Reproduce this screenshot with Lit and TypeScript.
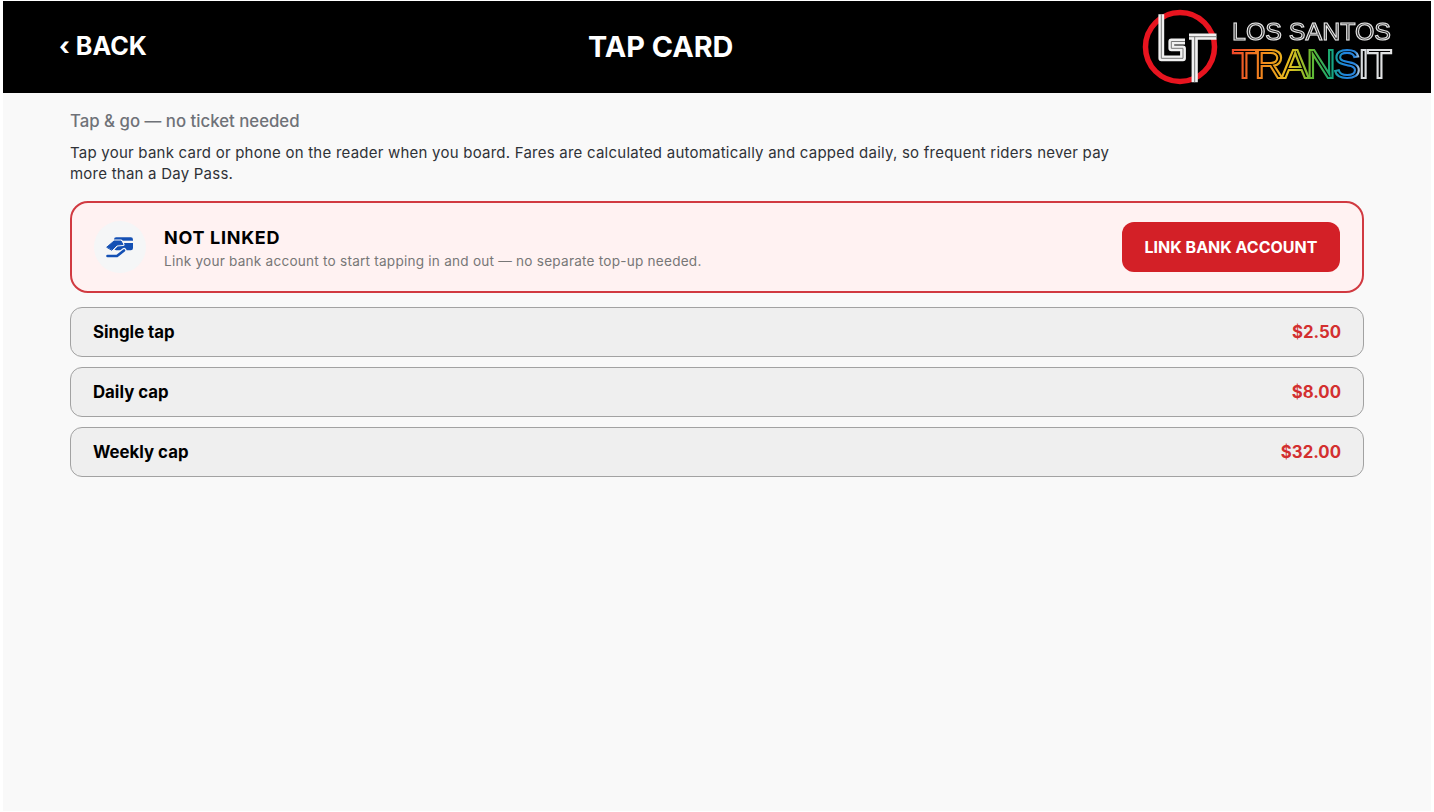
import { LitElement, html, css, svg } from "lit";
import { customElement } from "lit/decorators.js";

const logo = svg`
<svg class="logo" viewBox="0 -8 252 92" width="252" height="92" aria-label="Los Santos Transit">
  <defs>
    <linearGradient id="rb" x1="90" x2="250" y1="0" y2="0" gradientUnits="userSpaceOnUse">
      <stop offset="0" stop-color="#f0452a"/>
      <stop offset=".2" stop-color="#f08a1c"/>
      <stop offset=".36" stop-color="#e6c01e"/>
      <stop offset=".5" stop-color="#62b832"/>
      <stop offset=".62" stop-color="#14a878"/>
      <stop offset=".7" stop-color="#1f86e0"/>
      <stop offset=".77" stop-color="#2a86dc"/>
      <stop offset=".8" stop-color="#d8dcdf"/>
      <stop offset="1" stop-color="#e4e4e4"/>
    </linearGradient>
  </defs>
  <circle cx="38" cy="38" r="34.500" fill="none" stroke="#e8141f" stroke-width="5.500"/>
  <g fill="none" stroke-linejoin="round">
    <path d="M19.300 5.300 V49.300 H41 V39.300 H29.300 V32.500 H43" stroke="#f0f0f0" stroke-width="5.800"/>
    <path d="M19.300 5.300 V49.300 H41 V39.300 H29.300 V32.500 H43" stroke="#777" stroke-width="1"/>
    <path d="M47 27.700 H74.500 M52.700 27.700 V73.300" stroke="#f0f0f0" stroke-width="6.200"/>
    <path d="M47 27.700 H74.500 M52.700 27.700 V73.300" stroke="#777" stroke-width="1"/>
  </g>
  <text class="los" x="90" y="31" textLength="159" lengthAdjust="spacingAndGlyphs">LOS SANTOS</text>
  <text class="tr" x="90" y="69" textLength="160" lengthAdjust="spacing" stroke="url(#rb)">TRANSIT</text>
</svg>`;

const rows = [
  ["Single tap", "$2.50"],
  ["Daily cap", "$8.00"],
  ["Weekly cap", "$32.00"],
];

@customElement("app-root")
export class AppRoot extends LitElement {
  static styles = css`
    :host {
      display: block;
      width: 1434px;
      height: 812px;
      box-sizing: border-box;
      padding: 1px 3px 1px 3px;
      background: #fff;
      font-family: Inter, "Liberation Sans", sans-serif;
      overflow: hidden;
    }
    .app { height: 100%; background: #f9f9f9; display: flex; flex-direction: column; }
    header {
      height: 92px;
      flex: none;
      background: #000;
      color: #fff;
      display: grid;
      grid-template-columns: 529px auto 1fr;
      align-items: center;
      padding: 0 37px 0 56px;
    }
    .back { font-size: 25.200px; font-weight: 700; margin-bottom: 2px; }
    h1 { margin: 0 0 2px; font-size: 28.800px; font-weight: 700; }
    .logo { justify-self: end; display: block; filter: blur(0.35px); }
    .los {
      font: 400 23.500px "Liberation Sans", sans-serif;
      fill: #333;
      stroke: #ececec;
      stroke-width: 1;
    }
    .tr {
      font: 400 41px "Liberation Sans", sans-serif;
      fill: #000;
      stroke-width: 2.100;
    }
    main { padding: 18px 67px 0; display: flex; flex-direction: column; }
    .sub { margin: 0; font-size: 16.800px; line-height: 20px; font-weight: 500; color: #6f7278; }
    .desc {
      margin: 11px 0 0;
      max-width: 1060px;
      font-size: 15px;
      letter-spacing: 0.23px;
      line-height: 21px;
      font-weight: 400;
      color: #2f3237;
    }
    .status {
      margin-top: 17px;
      height: 92px;
      box-sizing: border-box;
      border: 2px solid #d13a41;
      border-radius: 18px;
      background: #fff2f2;
      padding: 0 22px;
      display: flex;
      align-items: center;
      gap: 18px;
    }
    .ic {
      width: 52px;
      height: 52px;
      border-radius: 50%;
      background: #f5f6f7;
      display: flex;
      align-items: center;
      justify-content: center;
      flex: none;
    }
    .txt { flex: 1; padding-top: 2px; }
    .ttl { font-size: 18px; line-height: 22px; font-weight: 700; letter-spacing: 0.7px; color: #000; }
    .msg { font-size: 13.600px; letter-spacing: 0.225px; line-height: 18px; color: #777; margin-top: 3px; }
    button {
      height: 50px;
      width: 218px;
      border: 0;
      border-radius: 12px;
      background: #d32027;
      color: #fff;
      font: 700 16px Inter, sans-serif;
      padding: 0;
    }
    .rows { margin-top: 14px; display: flex; flex-direction: column; gap: 10px; }
    .row {
      height: 50px;
      box-sizing: border-box;
      border: 1px solid #a2a2a2;
      border-radius: 12px;
      background: #efefef;
      padding: 0 22px;
      display: flex;
      align-items: center;
      justify-content: space-between;
      font-size: 16.800px;
      font-weight: 700;
    }
    .l { color: #000; font-weight: 700; }
    .p { color: #d32f2f; }
  `;

  render() {
    return html`<div class="app">
      <header>
        <div class="back">‹ BACK</div>
        <h1>TAP CARD</h1>
        ${logo}
      </header>
      <main>
        <p class="sub">Tap &amp; go — no ticket needed</p>
        <p class="desc">Tap your bank card or phone on the reader when you board. Fares are calculated automatically and capped daily, so frequent riders never pay more than a Day Pass.</p>
        <section class="status">
          <div class="ic">
            <svg width="30" height="24" viewBox="0 0 30 24">
              <rect x="9" y="2.300" width="19" height="13" rx="2.200" fill="#1450b4"/>
              <rect x="11" y="5.700" width="17" height="2.300" fill="#f5f6f7"/>
              <g stroke-linejoin="round" stroke-linecap="round">
                <path d="M2 12 L9 6 H16 L18 9.500 L12 10 L7 15 Z" fill="#1450b4" stroke="#f5f6f7" stroke-width="3"/>
                <path d="M2 12 L9 6 H16 L18 9.500 L12 10 L7 15 Z" fill="#1450b4" stroke="#1450b4" stroke-width="1"/>
                <path d="M2.500 21 H12 L19 15.500" fill="none" stroke="#f5f6f7" stroke-width="5"/>
                <path d="M2.500 21 H12 L19 15.500" fill="none" stroke="#1450b4" stroke-width="2.600"/>
              </g>
            </svg>
          </div>
          <div class="txt">
            <div class="ttl">NOT LINKED</div>
            <div class="msg">Link your bank account to start tapping in and out — no separate top-up needed.</div>
          </div>
          <button>LINK BANK ACCOUNT</button>
        </section>
        <div class="rows">
          ${rows.map(([l, p]) => html`<div class="row"><span class="l">${l}</span><span class="p">${p}</span></div>`)}
        </div>
      </main>
    </div>`;
  }
}
